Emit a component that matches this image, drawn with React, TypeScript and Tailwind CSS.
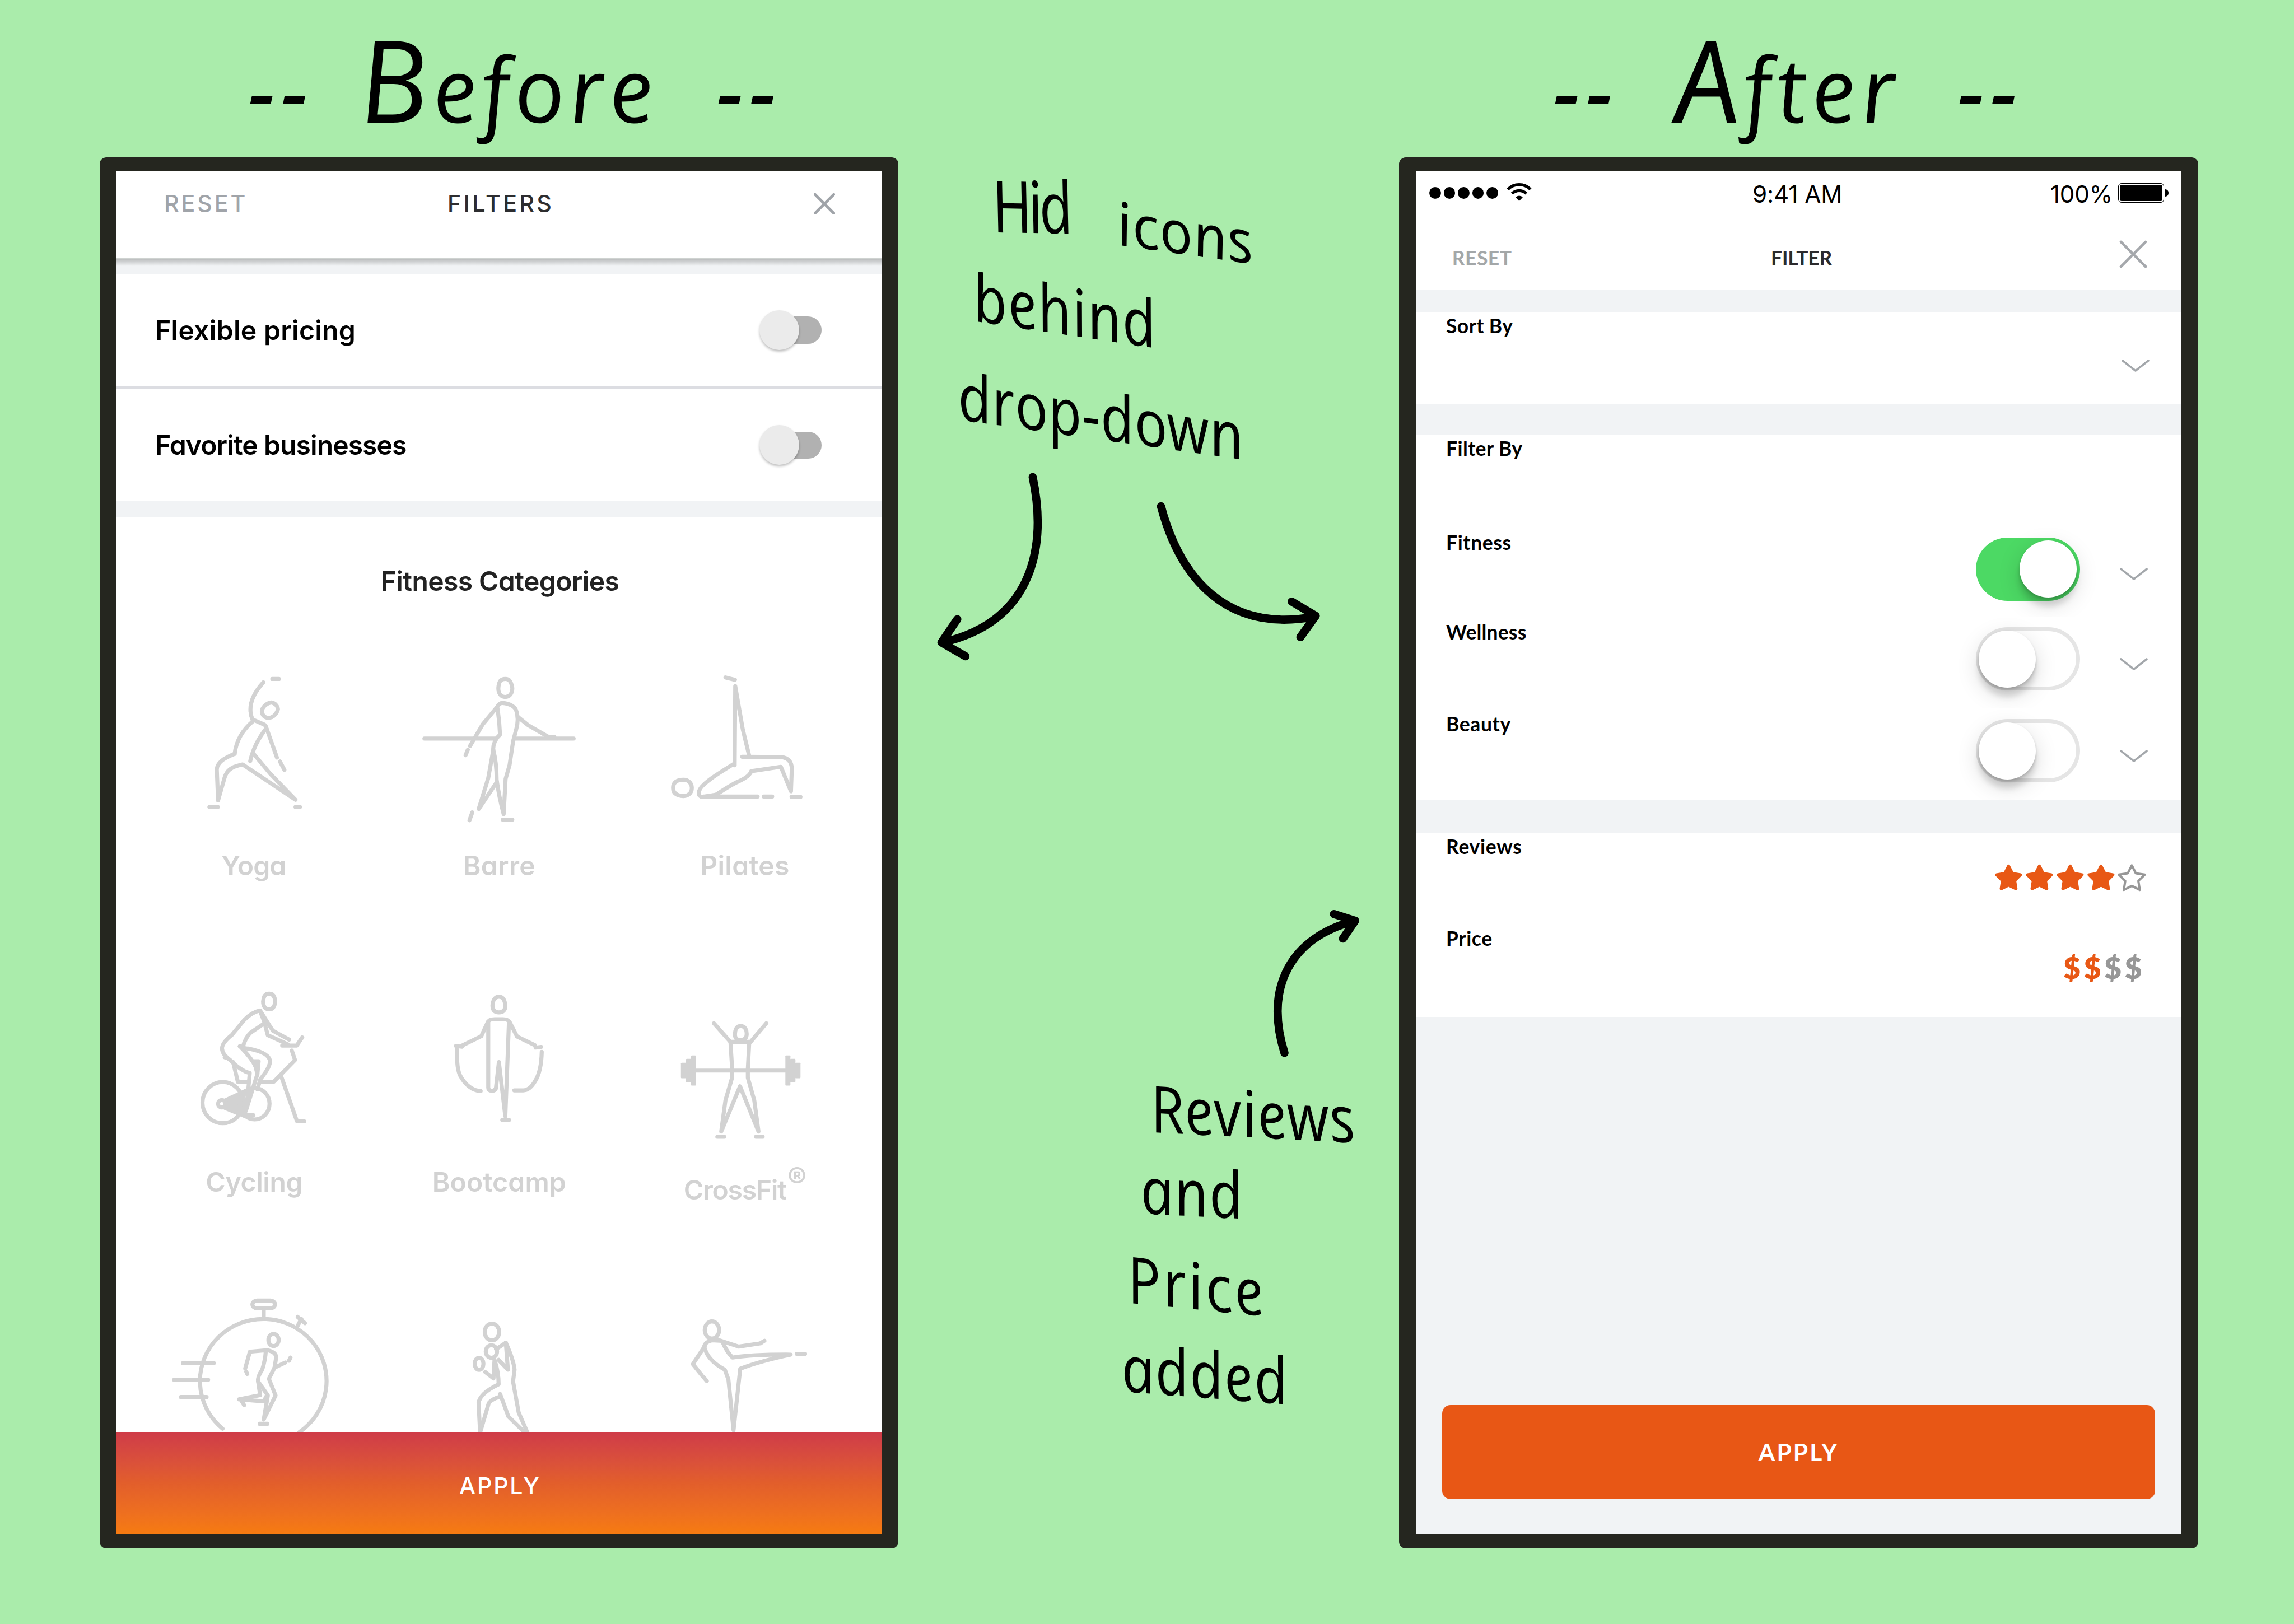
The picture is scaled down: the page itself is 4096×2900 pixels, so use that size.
import type { ReactNode } from "react";

/* ---------- line drawings ---------- */

function Figure({ viewBox, className, children }: { viewBox: string; className?: string; children: ReactNode }) {
  return (
    <svg
      viewBox={viewBox}
      preserveAspectRatio="none"
      fill="none"
      strokeLinecap="round"
      strokeLinejoin="round"
      aria-hidden="true"
      className={
        "block w-full text-[#d2d2d2] stroke-current [stroke-width:7.2px] [&_*]:[vector-effect:non-scaling-stroke] " +
        (className ?? "h-[364.7px]")
      }
    >
      {children}
    </svg>
  );
}

const YogaFigure = () => (
  <Figure viewBox="75.3 -60 992.4 1200">
    <path d="M648 208H675" />
    <path d="M612 228C570 295 545 370 569 450" />
    <path d="M645 346C660 350 670 368 671 386C668 405 655 436 632 437C618 436 606 420 606 398C608 370 628 348 645 346Z" />
    <path d="M496 648C502 575 528 505 575 450L614 475Q624 482 624 498" />
    <path d="M624 498C590 560 570 620 559 690" />
    <path d="M625 498L667 670M679 693L697 742" />
    <path d="M496 648C450 675 425 700 424 740L429 922L456 785C465 745 480 725 528 710L742 918L640 765L574 650" />
    <path d="M394 960H428M742 960H760" />
  </Figure>
);

const BarreFigure = () => (
  <Figure viewBox="-77.5 -60 877 1200">
    <path d="M383 208C397 208 404 222 408 262C408 295 397 314 383 314C367 314 358 292 358 262C360 220 367 208 383 208Z" />
    <path d="M94 558H350M418 558H627" />
    <path d="M354 372L302 475L257 602M249 624L241 656" />
    <path d="M354 372Q362 348 373 349C400 352 420 372 423 400Q432 450 421 510L411 572L398 715L384 795L377 1002C365 930 357 860 352 800Q352 700 340 625C338 590 350 555 364 535Q362 450 354 372Z" />
    <path d="M340 625L322 790L288 972L352 815" />
    <path d="M265 992L255 1038M374 1035H408" />
    <path d="M427 430L465 480L537 548H558" />
  </Figure>
);

const PilatesFigure = () => (
  <Figure viewBox="799.5 -60 877 1200">
    <path d="M1168 199L1202 213" />
    <path d="M1201 715L1203 250L1230 505L1253 660" />
    <path d="M1228 665L1368 667Q1404 675 1405 735L1402 868L1366 724L1260 750Q1255 780 1215 810Q1190 828 1135 888" />
    <path d="M1200 705C1150 755 1075 830 1074 870Q1070 905 1090 899L1135 888M1090 899H1283" />
    <path d="M1305 899H1335M1404 901H1436" />
    <path d="M1018 800C1038 800 1048 825 1048 848C1048 878 1035 896 1018 896C995 894 981 880 981 848C981 815 995 800 1018 800Z" />
  </Figure>
);

const CyclingFigure = () => (
  <Figure viewBox="75.3 -120 992.4 1200">
    <path d="M636 138C655 138 659 165 660 184C658 212 652 230 636 230C618 230 611 208 611 184C613 155 618 138 636 138Z" />
    <path d="M598 237C570 245 550 270 535 292L485 380C455 415 445 440 445 460C446 490 460 510 478 528Q520 590 557 605L550 720L541 828L588 610C588 570 560 510 517 447" />
    <path d="M598 237L615 300L630 382L710 435M600 240L650 355L716 408" />
    <path d="M610 318L560 368Q540 395 530 447" />
    <path d="M517 447Q540 462 550 460C620 480 640 510 639 540Q635 580 600 640L588 700" />
    <path d="M456 512L470 518" />
    <path d="M490 540L509 656H550M605 656H654L740 528L727 472" />
    <path d="M688 443H747L769 395M682 615L748 888H777" />
    <path d="M575 535H593L588 610Z" fill="currentColor" />
    <ellipse cx="448" cy="778" rx="82" ry="121" />
    <ellipse cx="444" cy="785" rx="15" ry="22" />
    <path d="M458 765L545 706Q505 785 538 858L458 810Z" fill="currentColor" />
    <ellipse cx="577" cy="785" rx="60" ry="92" />
    <path d="M538 853H572" />
  </Figure>
);

const BootcampFigure = () => (
  <Figure viewBox="-77.5 -120 877 1200">
    <path d="M360 156C378 156 382 185 383 210C383 235 375 248 360 248C344 248 337 232 337 208C338 180 345 156 360 156Z" />
    <path d="M322 303Q325 288 345 288H375Q392 288 396 303L383 858L360 540L350 685Q350 708 335 708Q322 708 322 690Z" />
    <path d="M321 303L297 388L230 442M228 450L207 445" />
    <path d="M398 303L425 390L488 440M491 455L511 451" />
    <path d="M210 467C208 540 215 600 222 620C238 670 265 708 295 710" />
    <path d="M513 480C512 560 505 610 490 650Q470 708 445 706H415" />
    <path d="M372 880H396" />
  </Figure>
);

const CrossFitFigure = () => (
  <Figure viewBox="799.5 -120 877 1200">
    <path d="M1127 312L1186 422M1314 312L1256 425" />
    <path d="M1222 328C1240 328 1244 355 1244 375C1244 395 1238 410 1222 410C1205 410 1202 395 1202 378C1202 350 1208 328 1222 328Z" />
    <path d="M1186 421H1254" />
    <path d="M1186 425L1192 580V630L1168 765L1153 948L1220 682L1286 948L1271 765L1248 632V580L1253 425" />
    <path d="M1060 590H1385" />
    <g fill="currentColor" stroke="none">
      <rect x="1009" y="544" width="19" height="91" rx="3" ry="5" />
      <rect x="1027" y="521" width="19" height="137" rx="3" ry="5" />
      <rect x="1045" y="501" width="18" height="177" rx="3" ry="5" />
      <rect x="1382" y="501" width="18" height="177" rx="3" ry="5" />
      <rect x="1399" y="521" width="19" height="137" rx="3" ry="5" />
      <rect x="1417" y="544" width="19" height="91" rx="3" ry="5" />
    </g>
    <path d="M1139 979H1164M1277 979H1301" />
  </Figure>
);

const StopwatchFigure = () => (
  <Figure viewBox="56.1 0 477.3 847" className="h-[295.4px]">
    <rect x="293" y="176" width="44" height="40" rx="9" ry="22" />
    <path d="M315 226V258" />
    <path d="M235 832A123 318 0 1 1 384 850" />
    <path d="M381 305L388 270M381 260L395 292" />
    <path d="M158 496H218M141 582H207M154 670H204" />
    <ellipse cx="334" cy="378" rx="10" ry="31" />
    <path d="M279 524L288 438L322 430Q340 440 339 470L336 520L325 577L338 662L315 785L323 662L304 590Q302 570 312 530Q318 480 319 435" />
    <path d="M336 520L357 493M364 484L367 468M281 540L283 552" />
    <path d="M304 590L308 660L267 682L315 692L321 662M272 690L277 712M307 807H322" />
  </Figure>
);

const BoxerFigure = () => (
  <Figure viewBox="533.4 0 477.3 847" className="h-[295.4px]">
    <ellipse cx="758" cy="337" rx="14" ry="43" />
    <ellipse cx="757" cy="437" rx="11" ry="32" />
    <ellipse cx="733" cy="500" rx="8.5" ry="31" />
    <path d="M766 425L785 392Q800 480 802 530L799 590L810 750L827 852" />
    <path d="M785 392L789 530L771 480" />
    <path d="M745 542L761 575L763 480Q771 540 771 605Q735 650 732 700L735 852L752 700Q758 680 774 668V655L790 770L822 852" />
  </Figure>
);

const KickFigure = () => (
  <Figure viewBox="1010.7 0 477.3 847" className="h-[295.4px]">
    <ellipse cx="1185" cy="327" rx="14" ry="44" />
    <path d="M1171 410L1148 502L1165 558M1168 566L1175 588" />
    <path d="M1198 378L1237 412L1280 395M1280 393L1287 382" />
    <path d="M1206 390Q1214 440 1225 468Q1265 452 1338 453Q1280 485 1240 525L1227 840L1217 580L1210 530Q1175 480 1170 410Q1172 388 1185 380L1200 382" />
    <path d="M1350 449H1366" />
  </Figure>
);

/* ---------- small controls ---------- */

function Cross({ className }: { className: string }) {
  return (
    <svg viewBox="0 0 50 50" fill="none" strokeLinecap="round" aria-hidden="true" className={className}>
      <path d="M3 3L47 47M47 3L3 47" />
    </svg>
  );
}

function Chevron({ className }: { className: string }) {
  return (
    <svg
      viewBox="0 0 50 22"
      fill="none"
      strokeLinecap="round"
      strokeLinejoin="round"
      aria-hidden="true"
      className={"h-[22px] w-[50px] stroke-[#a3a7ab] [stroke-width:3.6px] " + className}
    >
      <path d="M2 2L25 20L48 2" />
    </svg>
  );
}

function MaterialSwitch() {
  return (
    <div className="relative flex h-[71.6px] w-[111px] items-center justify-end">
      <div className="h-[48.2px] w-[102px] rounded-full bg-[#b1b1b1]" />
      <div className="absolute left-0 top-0 size-[71.6px] rounded-full bg-[#ebebeb] shadow-[0_3px_4px_rgba(0,0,0,0.25)]" />
    </div>
  );
}

function IosSwitch({ on }: { on: boolean }) {
  return (
    <div
      className={
        "mt-[18.8px] flex h-[113.1px] w-[186px] shrink-0 items-center rounded-full " +
        (on
          ? "justify-end bg-[#4cd964] pr-[5.5px]"
          : "justify-start bg-white pl-[4.7px] shadow-[inset_0_0_0_7px_#e5e5e5]")
      }
    >
      <div className="size-[102.1px] rounded-full bg-white shadow-[0_12px_40px_rgba(0,0,0,0.15),0_16px_11px_rgba(0,0,0,0.13),0_3px_5px_rgba(0,0,0,0.16)]" />
    </div>
  );
}

function Star({ filled }: { filled: boolean }) {
  return (
    <svg viewBox="0 0 60 60" strokeLinejoin="round" aria-hidden="true" className="size-[54.8px]">
      {filled ? (
        <path
          d="M30 4L37.3 18.4L53.3 20.9L41.9 32.4L44.4 48.3L30 41L15.6 48.3L18.1 32.4L6.7 20.9L22.7 18.4Z"
          fill="#e85815"
          stroke="#e85815"
          strokeWidth="6"
        />
      ) : (
        <path
          d="M30 2.5L37.8 18L55.5 20.5L42.8 33L45.6 50.5L30 42.5L14.4 50.5L17.2 33L4.5 20.5L22.2 18Z"
          fill="none"
          stroke="#979797"
          strokeWidth="4.5"
        />
      )}
    </svg>
  );
}

/* ---------- left phone ---------- */

function SwitchRow({ label, className }: { label: string; className: string }) {
  return (
    <div className="flex h-[201.5px] items-center justify-between pl-[69.5px] pr-[108.5px]">
      <span className={"pt-px text-[48.1px] text-black " + className}>{label}</span>
      <MaterialSwitch />
    </div>
  );
}

function Category({ figure, label, className }: { figure: ReactNode; label: ReactNode; className: string }) {
  return (
    <div className="h-[565.3px] w-[438.6px]">
      {figure}
      <div className={"flex h-[101px] items-center justify-center text-[48.1px] leading-none text-[#d2d2d2] " + className}>
        {label}
      </div>
    </div>
  );
}

function BeforeScreen() {
  return (
    <div className="flex h-[2432.8px] w-[1367.8px] flex-col overflow-hidden bg-white font-[Inter,sans-serif] font-semibold [font-feature-settings:'cv11']">
      <header className="h-[154.5px] shrink-0">
        <div className="grid h-[116px] grid-cols-[1fr_auto_1fr] items-center pl-[85.5px] pr-[84px] text-[41.2px] font-medium">
          <span className="tracking-[3.88px] text-[#a0a4a9]">RESET</span>
          <span className="pl-[4px] tracking-[4.33px] text-[#2d2d2f]">FILTERS</span>
          <Cross className="size-[38px] justify-self-end stroke-[#a0a4a9] [stroke-width:6.5px]" />
        </div>
      </header>
      <div className="h-[28px] shrink-0 bg-[#f1f3f5]">
        <div className="h-[14px] border-t border-[#cfd3d1] bg-linear-to-b from-[#b9bbbc] to-[#f1f3f5]" />
      </div>
      <SwitchRow label="Flexible pricing" className="tracking-[0.28px]" />
      <div className="h-[3.6px] shrink-0 bg-[#dcdde2]" />
      <SwitchRow label="Favorite businesses" className="tracking-[-0.95px]" />
      <div className="h-[27.5px] shrink-0 bg-[#f1f3f5]" />
      <h2 className="flex h-[207.7px] shrink-0 items-center justify-center pl-[2px] pt-[23px] text-[48.1px] tracking-[-0.65px] text-[#222]">
        Fitness Categories
      </h2>
      <div className="grid h-[1426px] shrink-0 grid-cols-[438.6px_438.6px_438.6px] justify-center overflow-hidden">
        <Category figure={<YogaFigure />} label="Yoga" className="tracking-[-0.9px]" />
        <Category figure={<BarreFigure />} label="Barre" className="tracking-[0.3px]" />
        <Category figure={<PilatesFigure />} label="Pilates" className="tracking-[0.3px]" />
        <Category figure={<CyclingFigure />} label="Cycling" className="pl-[2px] tracking-[-0.4px]" />
        <Category figure={<BootcampFigure />} label="Bootcamp" className="tracking-[0.15px]" />
        <Category
          figure={<CrossFitFigure />}
          label={
            <>
              CrossFit<span className="-mt-[42px] ml-[2px] text-[52px] font-medium leading-none">®</span>
            </>
          }
          className="pt-[28px] tracking-[-1.3px]"
        />
        <StopwatchFigure />
        <BoxerFigure />
        <KickFigure />
      </div>
      <button className="flex-1 bg-linear-to-b from-[#cf3b48] via-[#e25e2b] to-[#f67b10] pl-[3px] pt-[13px] text-[41.2px] font-medium tracking-[2.75px] text-white">
        APPLY
      </button>
    </div>
  );
}

/* ---------- right phone ---------- */

function StatusBar() {
  return (
    <div className="grid h-[80px] shrink-0 grid-cols-[1fr_auto_1fr] items-center bg-white pl-[24.9px] pr-[23.7px] font-[Inter,sans-serif] text-[42.2px] text-black">
      <div className="-mt-[4px] flex items-center">
        <div className="flex gap-[5px]">
          {[0, 1, 2, 3, 4].map((i) => (
            <span key={i} className="size-[20.5px] rounded-full bg-black" />
          ))}
        </div>
        <svg viewBox="0 0 46 34" aria-hidden="true" className="-mt-[3px] ml-[15.5px] h-[33px] w-[45px] fill-none stroke-black [stroke-width:5.4px]">
          <path d="M2.2 12.5A29 29 0 0 1 43.8 12.5" />
          <path d="M9.8 20.2A18.6 18.6 0 0 1 36.2 20.2" />
          <path d="M23 34L16.4 27A9.4 9.4 0 0 1 29.6 27Z" className="fill-black stroke-none" />
        </svg>
      </div>
      <span className="pr-[6px] tracking-[-0.12px]">9:41 AM</span>
      <div className="flex items-center justify-end">
        <span className="tracking-[-0.11px]">100%</span>
        <div className="-mt-[4px] ml-[10px] flex items-center">
          <div className="h-[35.2px] w-[82px] rounded-[6px] border-[1.8px] border-black p-[2px]">
            <div className="size-full rounded-[3px] bg-black" />
          </div>
          <div className="ml-[2px] h-[13px] w-[5.5px] rounded-r-full bg-black" />
        </div>
      </div>
    </div>
  );
}

function OptionRow({
  label,
  labelClass,
  className,
  children,
}: {
  label: string;
  labelClass: string;
  className?: string;
  children?: ReactNode;
}) {
  return (
    <div className={"flex items-start justify-between overflow-hidden bg-white pl-[54.5px] " + (className ?? "h-[164.1px]")}>
      <span className={"text-[35.5px] font-bold text-black " + labelClass}>{label}</span>
      <div className="flex items-start">{children}</div>
    </div>
  );
}

function AfterScreen() {
  return (
    <div className="flex h-[2432.8px] w-[1367.8px] flex-col overflow-hidden bg-[#f1f3f5] font-[Lato,sans-serif]">
      <StatusBar />
      <header className="grid h-[131.5px] shrink-0 grid-cols-[1fr_auto_1fr] items-center bg-white pl-[65.2px] pr-[60.9px] text-[35.5px] font-bold">
        <span className="pt-[18px] tracking-[0.45px] text-[#a3a7a8]">RESET</span>
        <span className="pl-[6px] pt-[18px] tracking-[-0.2px] text-[#2b2b2d]">FILTER</span>
        <Cross className="mt-[3px] size-[50px] justify-self-end stroke-[#a5a8ac] [stroke-width:4.6px]" />
      </header>

      <section className="mt-[40.1px]">
        <OptionRow label="Sort By" labelClass="leading-[48px] tracking-[0.38px]">
          <Chevron className="mr-[57.5px] mt-[84px]" />
        </OptionRow>
      </section>

      <section className="mt-[54.7px]">
        <OptionRow label="Filter By" labelClass="leading-[48px] tracking-[0.4px]" />
        <OptionRow label="Fitness" labelClass="leading-[55px] tracking-[0.6px]" className="h-[160.5px]">
          <IosSwitch on />
          <Chevron className="ml-[71.5px] mr-[60px] mt-[73.5px]" />
        </OptionRow>
        <OptionRow label="Wellness" labelClass="leading-[55px] tracking-[0.18px]">
          <IosSwitch on={false} />
          <Chevron className="ml-[71.5px] mr-[60px] mt-[73.5px]" />
        </OptionRow>
        <OptionRow label="Beauty" labelClass="leading-[55px] tracking-[0.6px]">
          <IosSwitch on={false} />
          <Chevron className="ml-[71.5px] mr-[60px] mt-[73.5px]" />
        </OptionRow>
      </section>

      <section className="mt-[58.4px]">
        <OptionRow label="Reviews" labelClass="leading-[48px] tracking-[0.7px]">
          <div className="mr-[62px] mt-[55px] flex">
            {[1, 2, 3, 4, 5].map((n) => (
              <Star key={n} filled={n <= 4} />
            ))}
          </div>
        </OptionRow>
        <OptionRow label="Price" labelClass="leading-[48px] tracking-[0.6px]">
          <div className="mr-[65px] mt-[46px] text-[53px] font-extrabold leading-[60px] tracking-[5.8px] text-[#979797]">
            <span className="text-[#e85815]">$$</span>$$
          </div>
        </OptionRow>
      </section>

      <button className="mx-[47.3px] mb-[62px] mt-auto h-[167.8px] rounded-[15px] bg-[#e85715] text-[42.5px] font-bold tracking-[3.1px] text-white">
        APPLY
      </button>
    </div>
  );
}

/* ---------- hand-written annotations ---------- */

function Title({ word, className, wordClass }: { word: string; className: string; wordClass: string }) {
  return (
    <h1
      className={
        "absolute top-0 flex items-baseline whitespace-nowrap font-['Open_Sans',sans-serif] italic leading-[280px] text-black " +
        className
      }
    >
      <span className="w-[100px] text-[150px] font-semibold tracking-[11px]">--</span>
      <span className={"text-[160px] font-medium first-letter:text-[204px] [transform:skewX(7deg)] " + wordClass}>{word}</span>
      <span className="w-[100px] text-[150px] font-semibold tracking-[11px]">--</span>
    </h1>
  );
}

function Word({ children, className }: { children: ReactNode; className: string }) {
  return (
    <span
      className={
        "absolute origin-[0_93px] whitespace-nowrap font-['Open_Sans',sans-serif] text-[105px] font-medium italic leading-none text-black " +
        className
      }
    >
      {children}
    </span>
  );
}

function Arrow({ viewBox, className, d }: { viewBox: string; className: string; d: string }) {
  return (
    <svg
      viewBox={viewBox}
      fill="none"
      stroke="#000"
      strokeWidth="16"
      strokeLinecap="round"
      strokeLinejoin="round"
      aria-hidden="true"
      className={"absolute " + className}
    >
      <path d={d} />
    </svg>
  );
}

function PhoneFrame({ children }: { children: ReactNode }) {
  return <div className="h-[2483.9px] w-[1426.2px] rounded-[12px] bg-[#25261f] px-[29.2px] py-[25.5px]">{children}</div>;
}

export default function App() {
  return (
    <main className="relative h-[2900px] w-[4096px] overflow-hidden bg-[#aaecab]">
      <div className="flex gap-[893.9px] pl-[178.3px] pt-[280.8px]">
        <PhoneFrame>
          <BeforeScreen />
        </PhoneFrame>
        <PhoneFrame>
          <AfterScreen />
        </PhoneFrame>
      </div>

      <Title word="Before" className="left-[443px]" wordClass="ml-[96px] mr-[110px] w-[530px] tracking-[8px]" />
      <Title word="After" className="left-[2773px]" wordClass="ml-[114px] mr-[106px] w-[402px] tracking-[9px]" />

      <Word className="left-[1778px] top-[322px] tracking-[-7px] [transform:skewY(1deg)_skewX(11deg)_scaleY(1.22)]">Hid</Word>
      <Word className="left-[2000px] top-[345px] tracking-[1px] [transform:skewY(8deg)_skewX(11deg)_scaleY(1.02)]">icons</Word>
      <Word className="left-[1744px] top-[481px] tracking-[1px] [transform:skewY(8.5deg)_skewX(11deg)_scaleY(1.12)]">behind</Word>
      <Word className="left-[1716px] top-[657px] [transform:skewY(8deg)_skewX(11deg)_scaleY(1.1)]">drop-down</Word>
      <Word className="left-[2060px] top-[1929px] tracking-[1px] [transform:skewY(3deg)_skewX(11deg)_scaleY(1.1)]">Reviews</Word>
      <Word className="left-[2042px] top-[2074px] tracking-[1.5px] [transform:skewY(3deg)_skewX(11deg)_scaleY(1.1)]">and</Word>
      <Word className="left-[2019px] top-[2234px] tracking-[4px] [transform:skewY(5.5deg)_skewX(11deg)_scaleY(1.1)]">Price</Word>
      <Word className="left-[2008px] top-[2392px] tracking-[1px] [transform:skewY(4.5deg)_skewX(11deg)_scaleY(1.1)]">added</Word>

      <Arrow
        viewBox="1820 910 240 400"
        className="left-[1659.6px] top-[829.8px] h-[364.7px] w-[218.8px]"
        d="M2021.7 934C2048 1060 2030 1215 1845 1258M1874 1212.6L1843 1258L1890 1285"
      />
      <Arrow
        viewBox="2250 970 360 300"
        className="left-[2051.7px] top-[884.5px] h-[273.6px] w-[328.3px]"
        d="M2273 991C2310 1130 2400 1240 2574 1207M2529 1177.5L2576 1205.5L2546 1247"
      />
      <Arrow
        viewBox="2480 1770 200 320"
        className="left-[2261.4px] top-[1614px] h-[291.8px] w-[182.4px]"
        d="M2515.6 2062C2475 1930 2530 1835 2654 1803M2612.5 1790L2654 1803L2630 1838"
      />
    </main>
  );
}
